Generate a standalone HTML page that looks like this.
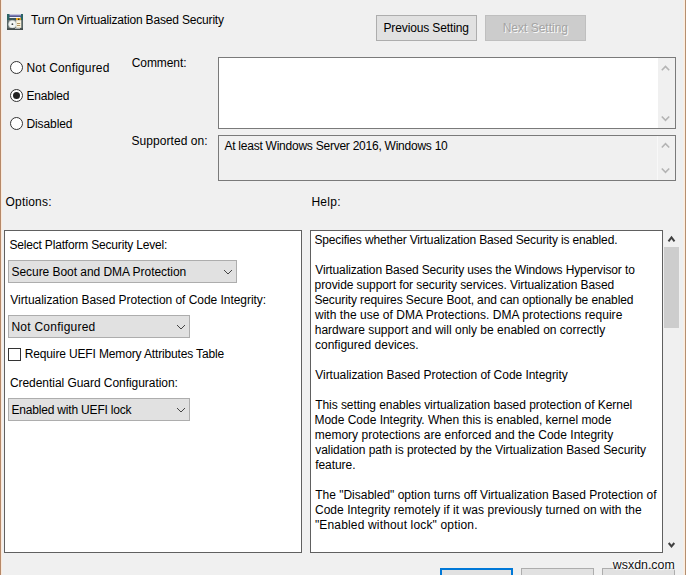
<!DOCTYPE html>
<html><head><meta charset="utf-8">
<style>
html,body{margin:0;padding:0;}
html{width:686px;height:575px;overflow:hidden;}
body{width:686px;height:575px;overflow:hidden;background:#f0f0f0;position:relative;font-family:"Liberation Sans",sans-serif;font-size:12px;color:#000;}
.t{position:absolute;white-space:nowrap;line-height:15px;font-size:12px;}
.box{position:absolute;box-sizing:border-box;}
.radio{position:absolute;width:13.2px;height:13.2px;box-sizing:border-box;border:1.2px solid #333;border-radius:50%;background:#fff;}
.radio.on::after{content:"";position:absolute;left:1.9px;top:1.9px;width:7px;height:7px;border-radius:50%;background:#222;}
.btn{position:absolute;box-sizing:border-box;border:1px solid #adadad;background:#e1e1e1;}
.sel{position:absolute;box-sizing:border-box;border:1px solid #adadad;background:#e1e1e1;height:23px;}
svg{position:absolute;overflow:visible;}
</style></head><body>
<div class="box" style="left:0;top:0;width:1px;height:575px;background:#b58868;"></div>
<div class="box" style="left:1px;top:0;width:1px;height:575px;background:#fbe9da;"></div>
<div class="box" style="left:680px;top:0;width:3px;height:575px;background:#edeff0;"></div>
<div class="box" style="left:683px;top:0;width:1px;height:575px;background:#f4eee9;"></div>
<div class="box" style="left:684px;top:0;width:1px;height:575px;background:#fcecdc;"></div>
<div class="box" style="left:685px;top:0;width:1px;height:575px;background:#b58f70;"></div>

<svg style="left:7px;top:14px" width="16" height="16" viewBox="0 0 16 16">
<rect x="0" y="0" width="16" height="16" fill="#566464"/>
<rect x="0" y="0" width="16" height="6" fill="#2a6464"/>
<rect x="2.5" y="0" width="11.5" height="1" fill="#c4c4dc"/>
<rect x="2.5" y="1" width="11.5" height="1" fill="#7c7cb4"/>
<rect x="2.5" y="2" width="11.5" height="1" fill="#54598a"/>
<rect x="2.5" y="3" width="11" height="1" fill="#f4f4fa"/>
<rect x="2" y="4" width="12" height="2" fill="#3c5656"/>
<rect x="9" y="4" width="5" height="2" fill="#e8a820"/>
<rect x="11" y="4.6" width="1.4" height="1.2" fill="#1c1c1c"/>
<rect x="1.5" y="6" width="13" height="8.3" fill="#7a8080"/>
<circle cx="5.4" cy="10.2" r="3.8" fill="#f4f6f4"/>
<circle cx="5.4" cy="10.2" r="3.8" fill="none" stroke="#c8d0cc" stroke-width="0.6"/>
<circle cx="5.4" cy="10.2" r="0.9" fill="#3c4444"/>
<rect x="9.2" y="6.2" width="5" height="7.6" fill="#fbf3dc"/>
<rect x="10" y="9" width="3.2" height="0.9" fill="#a88850"/>
<rect x="10" y="11" width="3.2" height="0.9" fill="#a88850"/>
<rect x="0" y="14.3" width="16" height="1.7" fill="#444c4c"/>
<rect x="8" y="14" width="5" height="0.8" fill="#c8c8c8"/>
</svg>

<div class="btn" style="left:376px;top:15px;width:101px;height:26px;"></div>
<div class="btn" style="left:485px;top:15px;width:101px;height:26px;background:#cccccc;border-color:#bfbfbf;"></div>

<div class="radio" style="left:9.8px;top:60.7px;"></div>
<div class="radio on" style="left:9.8px;top:88.7px;"></div>
<div class="radio" style="left:9.8px;top:116.7px;"></div>

<div class="box" style="left:218px;top:57px;width:458px;height:72px;border:1px solid #7a7a7a;background:#fff;"></div>
<div class="box" style="left:658px;top:58px;width:17px;height:70px;background:#f0f0f0;"></div>
<div class="box" style="left:218px;top:135px;width:458px;height:46px;border:1px solid #7a7a7a;background:#f0f0f0;"></div>
<div class="box" style="left:657px;top:136px;width:1px;height:44px;background:#f8f8f8;"></div>
<svg style="left:658px;top:58px" width="17" height="122" viewBox="0 0 17 122" fill="none" stroke="#b4b4b4" stroke-width="1.6">
<path d="M3.8 12.2 L7.5 8.4 L11.2 12.2"/>
<path d="M3.8 58.5 L7.5 62.3 L11.2 58.5"/>
<path d="M3.8 89.5 L7.5 85.7 L11.2 89.5"/>
<path d="M3.8 110.5 L7.5 114.3 L11.2 110.5"/>
</svg>

<div class="box" style="left:4px;top:230px;width:298px;height:323px;border:1px solid #606060;background:#fff;"></div>
<div class="box" style="left:310px;top:230px;width:353px;height:323px;border:1px solid #606060;background:#fff;"></div>
<div class="box" style="left:664px;top:247px;width:15px;height:81px;background:#cdcdcd;"></div>
<svg style="left:663px;top:230px" width="17" height="323" viewBox="0 0 17 323" fill="none" stroke="#404040" stroke-width="2">
<path d="M5.5 11.4 L8.5 7.5 L11.5 11.4"/>
<path d="M5.7 313 L8.5 316.4 L11.3 313"/>
</svg>

<div class="sel" style="left:8px;top:260px;width:229px;"></div>
<div class="sel" style="left:8px;top:315px;width:182px;"></div>
<div class="sel" style="left:8px;top:398px;width:182px;"></div>
<svg style="left:0;top:0" width="686" height="575" viewBox="0 0 686 575" fill="none" stroke="#444" stroke-width="1">
<path d="M224 270 L228 274 L232 270"/>
<path d="M177 325 L181 329 L185 325"/>
<path d="M177 408 L181 412 L185 408"/>
</svg>
<div class="box" style="left:8px;top:348px;width:13px;height:13px;border:1px solid #333;background:#fff;"></div>

<div class="btn" style="left:440px;top:568px;width:73px;height:7px;border:2px solid #0078d7;border-bottom:0;"></div>
<div class="btn" style="left:521px;top:568px;width:73px;height:7px;border-bottom:0;"></div>
<div class="btn" style="left:602px;top:568px;width:73px;height:7px;border-bottom:0;"></div>
<div class="t" style="left:612.8px;top:558px;font-size:12.4px;color:#111;text-shadow:0 0 2px #fff,0 0 2px #fff,1px 1px 1px #fff,-1px -1px 1px #fff;">wsxdn.com</div>
<div class="t" id="title" style="left:30.94px;top:13px;letter-spacing:-0.176px;">Turn On Virtualization Based Security</div>
<div class="t" id="r1" style="left:26.47px;top:61px;letter-spacing:0.167px;">Not Configured</div>
<div class="t" id="r2" style="left:26.47px;top:89px;letter-spacing:-0.167px;">Enabled</div>
<div class="t" id="r3" style="left:26.47px;top:117px;letter-spacing:-0.092px;">Disabled</div>
<div class="t" id="cm" style="left:131.73px;top:56px;letter-spacing:-0.074px;">Comment:</div>
<div class="t" id="so" style="left:131.51px;top:134px;letter-spacing:0.055px;">Supported on:</div>
<div class="t" id="atl" style="left:224.43px;top:139px;letter-spacing:-0.241px;">At least Windows Server 2016, Windows 10</div>
<div class="t" id="opt" style="left:5.57px;top:195px;letter-spacing:0.173px;">Options:</div>
<div class="t" id="hlp" style="left:311.41px;top:195px;letter-spacing:0.264px;">Help:</div>
<div class="t" id="o1" style="left:9.42px;top:238px;letter-spacing:-0.181px;">Select Platform Security Level:</div>
<div class="t" id="s1t" style="left:11.51px;top:265px;letter-spacing:-0.048px;">Secure Boot and DMA Protection</div>
<div class="t" id="o2" style="left:10.29px;top:293px;letter-spacing:-0.042px;">Virtualization Based Protection of Code Integrity:</div>
<div class="t" id="s2t" style="left:11.47px;top:320px;letter-spacing:0.238px;">Not Configured</div>
<div class="t" id="o3" style="left:24.77px;top:347px;letter-spacing:-0.145px;">Require UEFI Memory Attributes Table</div>
<div class="t" id="o4" style="left:9.92px;top:376px;letter-spacing:-0.048px;">Credential Guard Configuration:</div>
<div class="t" id="s3t" style="left:11.47px;top:403px;letter-spacing:-0.186px;">Enabled with UEFI lock</div>
<div class="t" id="pv" style="left:383.46px;top:21px;letter-spacing:-0.123px;">Previous Setting</div>
<div class="t" id="nx" style="left:502.70px;top:21px;letter-spacing:-0.006px;color:#a4a4a4;text-shadow:1px 1px 0 #fafafa;">Next Setting</div>
<div class="t" id="h0" style="left:314.42px;top:233px;letter-spacing:-0.153px;">Specifies whether Virtualization Based Security is enabled.</div>
<div class="t" id="h1" style="left:315.29px;top:263px;letter-spacing:-0.131px;">Virtualization Based Security uses the Windows Hypervisor to</div>
<div class="t" id="h2" style="left:314.57px;top:278px;letter-spacing:-0.086px;">provide support for security services. Virtualization Based</div>
<div class="t" id="h3" style="left:314.42px;top:293px;letter-spacing:-0.110px;">Security requires Secure Boot, and can optionally be enabled</div>
<div class="t" id="h4" style="left:314.97px;top:308px;letter-spacing:0.034px;">with the use of DMA Protections. DMA protections require</div>
<div class="t" id="h5" style="left:314.74px;top:323px;letter-spacing:0.006px;">hardware support and will only be enabled on correctly</div>
<div class="t" id="h6" style="left:314.94px;top:338px;letter-spacing:0.019px;">configured devices.</div>
<div class="t" id="h7" style="left:315.29px;top:368px;letter-spacing:-0.044px;">Virtualization Based Protection of Code Integrity</div>
<div class="t" id="h8" style="left:315.17px;top:398px;letter-spacing:-0.051px;">This setting enables virtualization based protection of Kernel</div>
<div class="t" id="h9" style="left:314.47px;top:413px;letter-spacing:-0.020px;">Mode Code Integrity. When this is enabled, kernel mode</div>
<div class="t" id="h10" style="left:314.70px;top:428px;letter-spacing:0.018px;">memory protections are enforced and the Code Integrity</div>
<div class="t" id="h11" style="left:315.30px;top:443px;letter-spacing:-0.060px;">validation path is protected by the Virtualization Based Security</div>
<div class="t" id="h12" style="left:315.22px;top:458px;letter-spacing:-0.062px;">feature.</div>
<div class="t" id="h13" style="left:315.17px;top:488px;letter-spacing:-0.003px;">The "Disabled" option turns off Virtualization Based Protection of</div>
<div class="t" id="h14" style="left:314.92px;top:503px;letter-spacing:0.054px;">Code Integrity remotely if it was previously turned on with the</div>
<div class="t" id="h15" style="left:314.94px;top:518px;letter-spacing:0.158px;">"Enabled without lock" option.</div>
</body></html>
